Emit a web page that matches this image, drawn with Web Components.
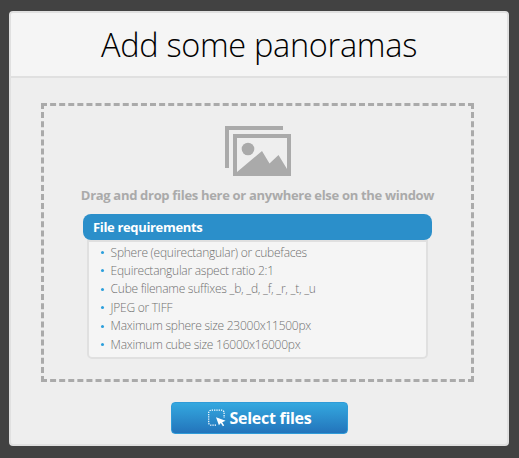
<!DOCTYPE html>
<html lang="en">
<head>
<meta charset="utf-8">
<title>Add some panoramas</title>
<style>
  * { box-sizing: border-box; }
  body {
    margin: 0;
    height: 458px;
    padding: 11px 10px 12px 9px;
    background: #424242;
    font-family: 'Open Sans', 'Noto Sans', sans-serif;
    overflow: hidden;
  }
</style>
</head>
<body>
<upload-panel>
  <span slot="title">Add some panoramas</span>
  <drop-zone>
    <span slot="hint">Drag and drop files here or anywhere else on the window</span>
    <file-requirements>
      <span slot="heading">File requirements</span>
      <requirement-item>Sphere (equirectangular) or cubefaces</requirement-item>
      <requirement-item>Equirectangular aspect ratio 2:1</requirement-item>
      <requirement-item>Cube filename suffixes _b, _d, _f, _r, _t, _u</requirement-item>
      <requirement-item>JPEG or TIFF</requirement-item>
      <requirement-item>Maximum sphere size 23000x11500px</requirement-item>
      <requirement-item>Maximum cube size 16000x16000px</requirement-item>
    </file-requirements>
  </drop-zone>
  <select-button slot="action">Select files</select-button>
</upload-panel>

<script>
class UploadPanel extends HTMLElement {
  constructor() {
    super();
    this.attachShadow({mode: 'open'}).innerHTML = `
      <style>
        :host {
          display: flex;
          flex-direction: column;
          box-sizing: border-box;
          width: 500px;
          height: 435px;
          border: 2px solid #e0e0e0;
          border-radius: 4px;
          background: #eee;
          overflow: hidden;
        }
        h1 {
          box-sizing: border-box;
          height: 65px;
          flex: none;
          margin: 0;
          padding-top: 1px;
          border-bottom: 2px solid #e0e0e0;
          background: #f5f5f5;
          color: #000;
          font-size: 32.5px;
          letter-spacing: -.31px;
          font-weight: 300;
          line-height: 62px;
          text-align: center;
          white-space: nowrap;
        }
        main { padding: 25px 0 0 30px; }
        footer { display: flex; padding: 20px 0 0 160px; }
      </style>
      <h1><slot name="title"></slot></h1>
      <main><slot></slot></main>
      <footer><slot name="action"></slot></footer>
    `;
  }
}

class DropZone extends HTMLElement {
  constructor() {
    super();
    this.attachShadow({mode: 'open'}).innerHTML = `
      <style>
        :host {
          display: flex;
          flex-direction: column;
          align-items: center;
          box-sizing: border-box;
          width: 433px;
          height: 279px;
          padding-top: 20px;
          border: 3px dashed #aaa;
        }
        .hint {
          height: 20px;
          margin: 9px 0;
          color: #aaa;
          font-size: 13px;
          font-weight: 700;
          letter-spacing: -.31px;
          line-height: 20px;
          white-space: nowrap;
        }
      </style>
      <picture-icon></picture-icon>
      <div class="hint"><slot name="hint"></slot></div>
      <slot></slot>
    `;
  }
}

class PictureIcon extends HTMLElement {
  constructor() {
    super();
    this.attachShadow({mode: 'open'}).innerHTML = `
      <style>
        :host { display: block; width: 66px; height: 50px; }
        svg { display: block; }
      </style>
      <svg width="66" height="50" viewBox="0 0 66 50" fill="#aaa">
        <path d="M0 0h58v4H4v38H0z"/>
        <path fill-rule="evenodd" d="M8 8h58v42H8zM12 12v34L37 25l7.5 12.500 9-8.500 8.500 14V12z"/>
        <circle cx="23" cy="23" r="6.3"/>
      </svg>
    `;
  }
}

class FileRequirements extends HTMLElement {
  constructor() {
    super();
    this.attachShadow({mode: 'open'}).innerHTML = `
      <style>
        :host { display: block; width: 349px; }
        .heading {
          height: 26px;
          box-sizing: border-box;
          padding-left: 10px;
          border-radius: 8px;
          background: #2b8fca;
          color: #fff;
          font-size: 13px;
          font-weight: 700;
          letter-spacing: -.34px;
          line-height: 26px;
        }
        .list {
          box-sizing: border-box;
          width: 341px;
          height: 119px;
          margin-left: 4px;
          padding: 1.4px 0 0 12px;
          border: 2px solid #e0e0e0;
          border-radius: 0 0 5px 5px;
          background: #f5f5f5;
        }
      </style>
      <div class="heading"><slot name="heading"></slot></div>
      <div class="list"><slot></slot></div>
    `;
  }
}

class RequirementItem extends HTMLElement {
  constructor() {
    super();
    this.attachShadow({mode: 'open'}).innerHTML = `
      <style>
        :host {
          display: flex;
          align-items: center;
          gap: 6.6px;
          height: 18.4px;
          color: #707070;
          font-size: 12px;
          font-weight: 300;
          letter-spacing: -.25px;
          line-height: 18px;
          white-space: nowrap;
        }
        i { width: 3px; height: 3px; border-radius: 50%; background: #2b9fdc; }
      </style>
      <i></i><span><slot></slot></span>
    `;
  }
}

class SelectButton extends HTMLElement {
  constructor() {
    super();
    this.attachShadow({mode: 'open'}).innerHTML = `
      <style>
        :host { display: block; }
        button {
          display: flex;
          align-items: center;
          box-sizing: border-box;
          width: 177px;
          height: 32px;
          padding: 0 0 0 36px;
          border: 1px solid #2f9bd8;
          border-radius: 4px;
          background: linear-gradient(#34a8df, #2374bb);
          color: #fff;
          font: 700 16px/30px 'Open Sans', 'Noto Sans', sans-serif;
          letter-spacing: -.28px;
          white-space: nowrap;
        }
        svg { margin-right: 3.5px; flex: none; }
      </style>
      <button>
        <svg width="18" height="18" viewBox="0 0 18 18" fill="none">
          <path d="M8 16.200H3.200a2.500 2.500 0 0 1-2.500-2.500V3.700a2.500 2.500 0 0 1 2.500-2.500h10.400a2.500 2.500 0 0 1 2.500 2.500V9" stroke="#fff" stroke-width="1.200" stroke-dasharray="1.300 1"/>
          <path d="M8 8.200l9.600 3.500-3.400 1.500 2 3.200-1.300.9-2.100-3.300-1.900 2.200z" fill="#fff"/>
        </svg>
        <span><slot></slot></span>
      </button>
    `;
  }
}

customElements.define('upload-panel', UploadPanel);
customElements.define('drop-zone', DropZone);
customElements.define('picture-icon', PictureIcon);
customElements.define('file-requirements', FileRequirements);
customElements.define('requirement-item', RequirementItem);
customElements.define('select-button', SelectButton);
</script>
</body>
</html>
